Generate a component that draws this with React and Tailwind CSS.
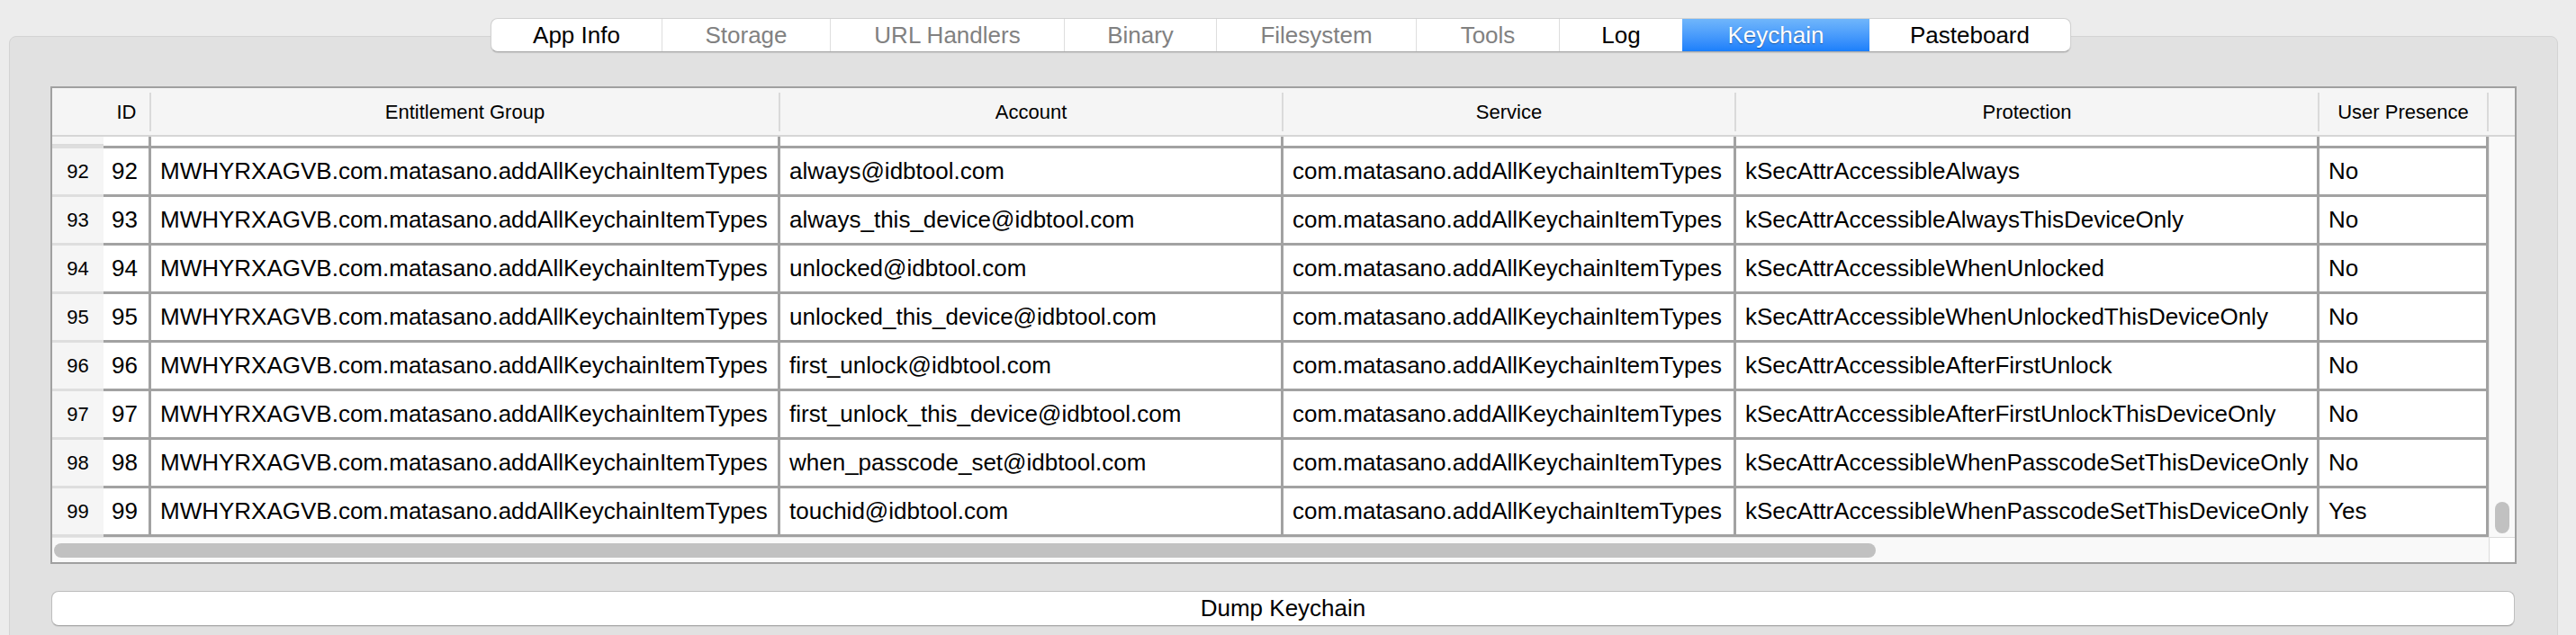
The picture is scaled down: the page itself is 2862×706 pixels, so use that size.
import React from "react";

const tabs = [
  { label: "App Info", w: "w-[189px]", state: "on" },
  { label: "Storage", w: "w-[187px]", state: "off" },
  { label: "URL Handlers", w: "w-[260px]", state: "off" },
  { label: "Binary", w: "w-[169px]", state: "off" },
  { label: "Filesystem", w: "w-[222px]", state: "off" },
  { label: "Tools", w: "w-[159px]", state: "off" },
  { label: "Log", w: "w-[137px]", state: "on" },
  { label: "Keychain", w: "w-[208px]", state: "active" },
  { label: "Pasteboard", w: "w-[223px]", state: "on" },
];

const service = "com.matasano.addAllKeychainItemTypes";
const group = "MWHYRXAGVB.com.matasano.addAllKeychainItemTypes";

const rows = [
  { id: 92, account: "always@idbtool.com", protection: "kSecAttrAccessibleAlways", presence: "No" },
  { id: 93, account: "always_this_device@idbtool.com", protection: "kSecAttrAccessibleAlwaysThisDeviceOnly", presence: "No" },
  { id: 94, account: "unlocked@idbtool.com", protection: "kSecAttrAccessibleWhenUnlocked", presence: "No" },
  { id: 95, account: "unlocked_this_device@idbtool.com", protection: "kSecAttrAccessibleWhenUnlockedThisDeviceOnly", presence: "No" },
  { id: 96, account: "first_unlock@idbtool.com", protection: "kSecAttrAccessibleAfterFirstUnlock", presence: "No" },
  { id: 97, account: "first_unlock_this_device@idbtool.com", protection: "kSecAttrAccessibleAfterFirstUnlockThisDeviceOnly", presence: "No" },
  { id: 98, account: "when_passcode_set@idbtool.com", protection: "kSecAttrAccessibleWhenPasscodeSetThisDeviceOnly", presence: "No" },
  { id: 99, account: "touchid@idbtool.com", protection: "kSecAttrAccessibleWhenPasscodeSetThisDeviceOnly", presence: "Yes" },
];

const HeaderSep = () => <div className="h-[43px] w-[2px] shrink-0 bg-[#dadada]" />;

const Cell = ({ w, children, center }) => (
  <div
    className={`${w} flex h-full shrink-0 items-center overflow-hidden whitespace-nowrap border-r-[3px] border-[#a2a2a2] ${
      center ? "justify-center pr-[3px]" : "pl-[10px]"
    }`}
  >
    {children}
  </div>
);

export default function App() {
  return (
    <div className="h-[706px] w-[2862px] overflow-hidden bg-[#ececec] pt-[20px] font-['Liberation_Sans',Arial,sans-serif] text-black">
      {/* Tab bar */}
      <div className="relative z-10 ml-[545px] flex h-[38px] w-[1756px] overflow-hidden rounded-[8px] border border-[#d2d2d2] border-b-[#ababab] bg-white shadow-[0_1px_1px_rgba(0,0,0,0.12)]">
        {tabs.map((t, i) => (
          <div
            key={t.label}
            className={`${t.w} flex shrink-0 items-center justify-center text-[26px] leading-none ${
              i > 0 && t.state !== "active" && tabs[i - 1].state !== "active" ? "border-l border-[#dedede]" : ""
            } ${
              t.state === "active"
                ? "bg-gradient-to-b from-[#70b6fb] to-[#1a7ffb] text-white [text-shadow:0_1px_1px_rgba(0,0,0,0.35)]"
                : t.state === "off"
                ? "text-[#818181]"
                : "text-black"
            }`}
          >
            {t.label}
          </div>
        ))}
      </div>

      {/* Panel */}
      <div className="-mt-[18px] ml-[10px] h-[700px] w-[2832px] rounded-[8px] border border-[#d3d3d3] bg-[#e1e1e1] pl-[45px] pt-[55px]">
        {/* Table */}
        <div className="flex w-[2740px] flex-col border-2 border-[#a0a0a0] bg-white">
          <div className="flex">
            <div className="flex w-[2707px] flex-col">
              {/* Header */}
              <div className="flex h-[54px] items-center border-b-2 border-[#d6d6d6] bg-[#f5f5f5] text-[22px]">
                <div className="w-[57px] shrink-0" />
                <div className="flex w-[51px] shrink-0 justify-center">ID</div>
                <HeaderSep />
                <div className="flex w-[697px] shrink-0 justify-center">Entitlement Group</div>
                <HeaderSep />
                <div className="flex w-[557px] shrink-0 justify-center">Account</div>
                <HeaderSep />
                <div className="flex w-[501px] shrink-0 justify-center">Service</div>
                <HeaderSep />
                <div className="flex w-[646px] shrink-0 justify-center">Protection</div>
                <HeaderSep />
                <div className="flex w-[186px] shrink-0 justify-center">User Presence</div>
                <HeaderSep />
              </div>

              {/* Partially scrolled row */}
              <div className="flex h-[10px]">
                <div className="w-[57px] shrink-0 border-b-2 border-[#dcdcdc] bg-[#f5f5f5]" />
                <Cell w="w-[53px]" />
                <Cell w="w-[699px]" />
                <Cell w="w-[559px]" />
                <Cell w="w-[503px]" />
                <Cell w="w-[648px]" />
                <Cell w="w-[188px]" />
              </div>

              {rows.map((r) => (
                <div key={r.id} className="flex h-[54px]">
                  <div className="flex w-[57px] shrink-0 items-center justify-center border-t-[3px] border-[#dedede] bg-[#f5f5f5] text-[22px]">
                    {r.id}
                  </div>
                  <div className="flex h-full border-t-[3px] border-[#a2a2a2] text-[26px]">
                    <Cell w="w-[53px]" center>{r.id}</Cell>
                    <Cell w="w-[699px]">{group}</Cell>
                    <Cell w="w-[559px]">{r.account}</Cell>
                    <Cell w="w-[503px]">{service}</Cell>
                    <Cell w="w-[648px]">{r.protection}</Cell>
                    <Cell w="w-[188px]">{r.presence}</Cell>
                  </div>
                </div>
              ))}

              <div className="flex h-[3px]">
                <div className="w-[57px] shrink-0 bg-[#dedede]" />
                <div className="flex-1 bg-[#a2a2a2]" />
              </div>
            </div>

            {/* Vertical scrollbar */}
            <div className="flex w-[29px] shrink-0 flex-col">
              <div className="h-[54px] border-b-2 border-[#d6d6d6] bg-[#f5f5f5]" />
              <div className="flex flex-1 flex-col items-center justify-end border-l border-[#e6e6e6] bg-[#f9f9f9] pb-[4px]">
                <div className="h-[35px] w-[16px] rounded-full bg-[#c1c1c1]" />
              </div>
            </div>
          </div>

          {/* Horizontal scrollbar */}
          <div className="flex h-[28px]">
            <div className="flex-1 border-t border-[#e6e6e6] bg-[#f9f9f9] pl-[2px] pt-[6px]">
              <div className="h-[16px] w-[2024px] rounded-full bg-[#c1c1c1]" />
            </div>
            <div className="w-[29px] shrink-0 border-l border-t border-[#dcdcdc] bg-white" />
          </div>
        </div>

        {/* Button */}
        <button className="ml-[1px] mt-[30px] flex h-[39px] w-[2737px] items-center justify-center rounded-[8px] border border-[#bdbdbd] border-b-[#a8a8a8] bg-white text-[26px] shadow-[0_1px_0_rgba(0,0,0,0.08)]">
          Dump Keychain
        </button>
      </div>
    </div>
  );
}
